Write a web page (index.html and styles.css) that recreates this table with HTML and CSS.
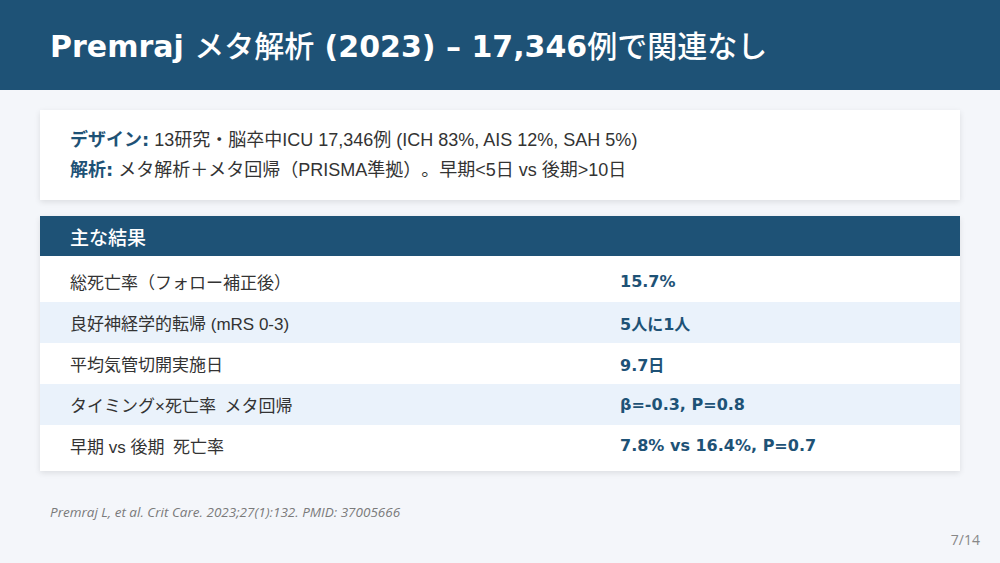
FILE: index.html
```html
<!DOCTYPE html>
<html lang="ja">
<head>
<meta charset="utf-8">
<title>Premraj メタ解析</title>
<link rel="stylesheet" href="styles.css">
</head>
<body>
<div class="slide">
  <header class="titlebar">
    <h1 class="title">Premraj <span class="jp">メタ解析</span> (2023) – 17,346<span class="jp">例で関連なし</span></h1>
  </header>

  <main class="content">
    <section class="card info">
      <p class="line"><span class="lbl">デザイン:</span> 13研究・脳卒中ICU 17,346例 (ICH 83%, AIS 12%, SAH 5%)</p>
      <p class="line"><span class="lbl">解析:</span> メタ解析＋メタ回帰（PRISMA準拠）。早期&lt;5日 vs 後期&gt;10日</p>
    </section>

    <section class="card results">
      <div class="results-head">主な結果</div>
      <div class="rows">
        <div class="row"><div class="cell label">総死亡率（フォロー補正後）</div><div class="cell value">15.7%</div></div>
        <div class="row alt"><div class="cell label">良好神経学的転帰 (mRS 0-3)</div><div class="cell value">5人に1人</div></div>
        <div class="row"><div class="cell label">平均気管切開実施日</div><div class="cell value">9.7日</div></div>
        <div class="row alt"><div class="cell label">タイミング×死亡率&ensp;メタ回帰</div><div class="cell value">β=-0.3, P=0.8</div></div>
        <div class="row"><div class="cell label">早期 vs 後期&ensp;死亡率</div><div class="cell value">7.8% vs 16.4%, P=0.7</div></div>
      </div>
    </section>

    <p class="cite">Premraj L, et al. Crit Care. 2023;27(1):132. PMID: 37005666</p>
  </main>

  <footer class="pageno">7/14</footer>
</div>
</body>
</html>
```

FILE: styles.css
```css
* { box-sizing: border-box; }

html, body {
  margin: 0;
  padding: 0;
}

body {
  width: 1000px;
  height: 563px;
  overflow: hidden;
  background: #f4f6fa;
  font-family: "Liberation Sans", "Noto Sans CJK JP", sans-serif;
  color: #333;
  text-spacing-trim: space-all;
}

.slide {
  width: 1000px;
  height: 563px;
  display: flex;
  flex-direction: column;
}

.titlebar {
  height: 90px;
  flex: none;
  background: #1e5276;
  display: flex;
  align-items: center;
  padding: 0 50px;
}

.title {
  margin: 0;
  color: #fff;
  font-family: "DejaVu Sans", "Noto Sans CJK JP", sans-serif;
  font-weight: 700;
  font-size: 30px;
  line-height: 1;
}

.title .jp {
  font-family: "Noto Sans CJK JP", sans-serif;
  font-weight: 500;
}

.content {
  flex: 1;
  padding: 20px 40px 0;
  display: flex;
  flex-direction: column;
}

.card {
  background: #fff;
  box-shadow: 0 2px 6px rgba(0, 0, 0, 0.1);
}

.info {
  padding: 15px 30px 15px;
}

.line {
  margin: 0;
  font-size: 18px;
  line-height: 29px;
  color: #333;
}

.lbl {
  font-family: "DejaVu Sans", "Noto Sans CJK JP", sans-serif;
  font-weight: 700;
  color: #1e5276;
}

.results {
  margin-top: 16px;
}

.results-head {
  height: 40px;
  background: #1e5276;
  color: #fff;
  font-family: "Noto Sans CJK JP", sans-serif;
  font-weight: 500;
  font-size: 19px;
  display: flex;
  align-items: center;
  padding: 0 30px;
}

.rows {
  padding: 5px 0;
}

.row {
  display: grid;
  grid-template-columns: 550px 1fr;
  height: 41px;
  align-items: center;
}

.row.alt {
  background: #eaf2fb;
}

.cell {
  padding: 0 30px;
}

.label {
  font-size: 17px;
  color: #333;
}

.value {
  font-family: "DejaVu Sans", "Noto Sans CJK JP", sans-serif;
  font-weight: 700;
  font-size: 16px;
  color: #1e5276;
}

.cite {
  margin: 32px 0 0 10px;
  font-family: "Open Sans", sans-serif;
  font-style: italic;
  font-size: 13.5px;
  line-height: 18px;
  color: #7a7a7a;
}

.pageno {
  text-align: right;
  padding: 0 20px 14px;
  font-family: "Open Sans", sans-serif;
  font-size: 14px;
  color: #888;
}
```
